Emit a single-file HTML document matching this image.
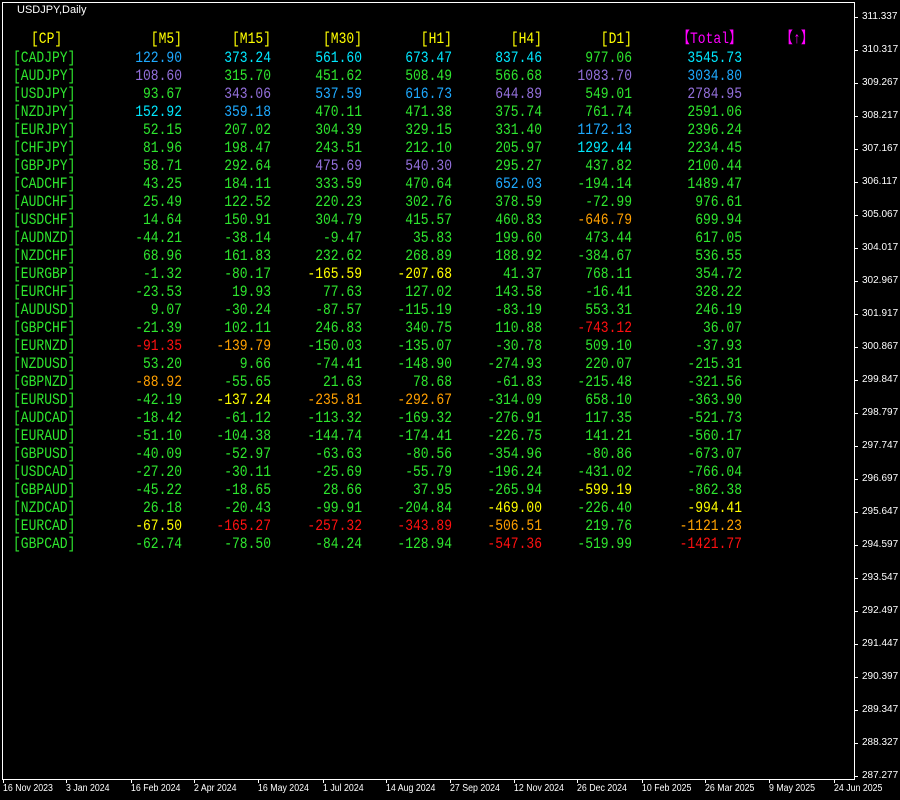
<!DOCTYPE html>
<html><head><meta charset="utf-8"><style>
body{margin:0;background:#000;width:900px;height:800px;overflow:hidden;position:relative;font-family:"Liberation Mono",monospace}
.frame{position:absolute;left:2px;top:2px;width:851px;height:776px;border:1px solid #fff}
.title{position:absolute;left:17px;top:4px;color:#fff;font:11px "Liberation Sans",sans-serif}
.r{position:absolute;left:0;width:900px;height:17px;font-size:13px;line-height:17px;transform:scaleY(1.22)}
.r span{position:absolute;top:0;white-space:pre}
.a{left:13px}
.b{right:718px}.c{right:629px}.d{right:538px}.e{right:448px}.f{right:358px}.g{right:268px}.h{right:158px}
.G{color:#2ee62e}.B{color:#1eaaff}.C{color:#00e8ff}.P{color:#9370db}.Y{color:#ffff00}.O{color:#ffa000}.R{color:#ff1010}.M{color:#ff00ff}
.ax{position:absolute;left:862px;color:#fff;font:10px "Liberation Sans",sans-serif}
.tk{position:absolute;left:854px;width:4px;height:1px;background:#fff}
.dt{position:absolute;top:783px;color:#fff;font:10px "Liberation Sans",sans-serif;white-space:nowrap;transform:scaleX(0.88);transform-origin:0 0}
.vt{position:absolute;top:779px;width:1px;height:4px;background:#fff}
</style></head><body>
<div class="frame"></div>
<div class="title">USDJPY,Daily</div>

<div class="r" style="top:30px"><span class="Y" style="left:31px">[CP]</span><span class="b Y">[M5]</span><span class="c Y">[M15]</span><span class="d Y">[M30]</span><span class="e Y">[H1]</span><span class="f Y">[H4]</span><span class="g Y">[D1]</span><span class="h M">【Total】</span><span class="M" style="left:780px">【↑】</span></div>

<div class="r" style="top:48.5px"><span class="a G">[CADJPY]</span><span class="b B">122.90</span><span class="c C">373.24</span><span class="d C">561.60</span><span class="e C">673.47</span><span class="f C">837.46</span><span class="g G">977.06</span><span class="h C">3545.73</span></div>
<div class="r" style="top:66.5px"><span class="a G">[AUDJPY]</span><span class="b P">108.60</span><span class="c G">315.70</span><span class="d G">451.62</span><span class="e G">508.49</span><span class="f G">566.68</span><span class="g P">1083.70</span><span class="h B">3034.80</span></div>
<div class="r" style="top:84.5px"><span class="a G">[USDJPY]</span><span class="b G">93.67</span><span class="c P">343.06</span><span class="d B">537.59</span><span class="e B">616.73</span><span class="f P">644.89</span><span class="g G">549.01</span><span class="h P">2784.95</span></div>
<div class="r" style="top:102.5px"><span class="a G">[NZDJPY]</span><span class="b C">152.92</span><span class="c B">359.18</span><span class="d G">470.11</span><span class="e G">471.38</span><span class="f G">375.74</span><span class="g G">761.74</span><span class="h G">2591.06</span></div>
<div class="r" style="top:120.5px"><span class="a G">[EURJPY]</span><span class="b G">52.15</span><span class="c G">207.02</span><span class="d G">304.39</span><span class="e G">329.15</span><span class="f G">331.40</span><span class="g B">1172.13</span><span class="h G">2396.24</span></div>
<div class="r" style="top:138.5px"><span class="a G">[CHFJPY]</span><span class="b G">81.96</span><span class="c G">198.47</span><span class="d G">243.51</span><span class="e G">212.10</span><span class="f G">205.97</span><span class="g C">1292.44</span><span class="h G">2234.45</span></div>
<div class="r" style="top:156.5px"><span class="a G">[GBPJPY]</span><span class="b G">58.71</span><span class="c G">292.64</span><span class="d P">475.69</span><span class="e P">540.30</span><span class="f G">295.27</span><span class="g G">437.82</span><span class="h G">2100.44</span></div>
<div class="r" style="top:174.5px"><span class="a G">[CADCHF]</span><span class="b G">43.25</span><span class="c G">184.11</span><span class="d G">333.59</span><span class="e G">470.64</span><span class="f B">652.03</span><span class="g G">-194.14</span><span class="h G">1489.47</span></div>
<div class="r" style="top:192.5px"><span class="a G">[AUDCHF]</span><span class="b G">25.49</span><span class="c G">122.52</span><span class="d G">220.23</span><span class="e G">302.76</span><span class="f G">378.59</span><span class="g G">-72.99</span><span class="h G">976.61</span></div>
<div class="r" style="top:210.5px"><span class="a G">[USDCHF]</span><span class="b G">14.64</span><span class="c G">150.91</span><span class="d G">304.79</span><span class="e G">415.57</span><span class="f G">460.83</span><span class="g O">-646.79</span><span class="h G">699.94</span></div>
<div class="r" style="top:228.5px"><span class="a G">[AUDNZD]</span><span class="b G">-44.21</span><span class="c G">-38.14</span><span class="d G">-9.47</span><span class="e G">35.83</span><span class="f G">199.60</span><span class="g G">473.44</span><span class="h G">617.05</span></div>
<div class="r" style="top:246.5px"><span class="a G">[NZDCHF]</span><span class="b G">68.96</span><span class="c G">161.83</span><span class="d G">232.62</span><span class="e G">268.89</span><span class="f G">188.92</span><span class="g G">-384.67</span><span class="h G">536.55</span></div>
<div class="r" style="top:264.5px"><span class="a G">[EURGBP]</span><span class="b G">-1.32</span><span class="c G">-80.17</span><span class="d Y">-165.59</span><span class="e Y">-207.68</span><span class="f G">41.37</span><span class="g G">768.11</span><span class="h G">354.72</span></div>
<div class="r" style="top:282.5px"><span class="a G">[EURCHF]</span><span class="b G">-23.53</span><span class="c G">19.93</span><span class="d G">77.63</span><span class="e G">127.02</span><span class="f G">143.58</span><span class="g G">-16.41</span><span class="h G">328.22</span></div>
<div class="r" style="top:300.5px"><span class="a G">[AUDUSD]</span><span class="b G">9.07</span><span class="c G">-30.24</span><span class="d G">-87.57</span><span class="e G">-115.19</span><span class="f G">-83.19</span><span class="g G">553.31</span><span class="h G">246.19</span></div>
<div class="r" style="top:318.5px"><span class="a G">[GBPCHF]</span><span class="b G">-21.39</span><span class="c G">102.11</span><span class="d G">246.83</span><span class="e G">340.75</span><span class="f G">110.88</span><span class="g R">-743.12</span><span class="h G">36.07</span></div>
<div class="r" style="top:336.5px"><span class="a G">[EURNZD]</span><span class="b R">-91.35</span><span class="c O">-139.79</span><span class="d G">-150.03</span><span class="e G">-135.07</span><span class="f G">-30.78</span><span class="g G">509.10</span><span class="h G">-37.93</span></div>
<div class="r" style="top:354.5px"><span class="a G">[NZDUSD]</span><span class="b G">53.20</span><span class="c G">9.66</span><span class="d G">-74.41</span><span class="e G">-148.90</span><span class="f G">-274.93</span><span class="g G">220.07</span><span class="h G">-215.31</span></div>
<div class="r" style="top:372.5px"><span class="a G">[GBPNZD]</span><span class="b O">-88.92</span><span class="c G">-55.65</span><span class="d G">21.63</span><span class="e G">78.68</span><span class="f G">-61.83</span><span class="g G">-215.48</span><span class="h G">-321.56</span></div>
<div class="r" style="top:390.5px"><span class="a G">[EURUSD]</span><span class="b G">-42.19</span><span class="c Y">-137.24</span><span class="d O">-235.81</span><span class="e O">-292.67</span><span class="f G">-314.09</span><span class="g G">658.10</span><span class="h G">-363.90</span></div>
<div class="r" style="top:408.5px"><span class="a G">[AUDCAD]</span><span class="b G">-18.42</span><span class="c G">-61.12</span><span class="d G">-113.32</span><span class="e G">-169.32</span><span class="f G">-276.91</span><span class="g G">117.35</span><span class="h G">-521.73</span></div>
<div class="r" style="top:426.5px"><span class="a G">[EURAUD]</span><span class="b G">-51.10</span><span class="c G">-104.38</span><span class="d G">-144.74</span><span class="e G">-174.41</span><span class="f G">-226.75</span><span class="g G">141.21</span><span class="h G">-560.17</span></div>
<div class="r" style="top:444.5px"><span class="a G">[GBPUSD]</span><span class="b G">-40.09</span><span class="c G">-52.97</span><span class="d G">-63.63</span><span class="e G">-80.56</span><span class="f G">-354.96</span><span class="g G">-80.86</span><span class="h G">-673.07</span></div>
<div class="r" style="top:462.5px"><span class="a G">[USDCAD]</span><span class="b G">-27.20</span><span class="c G">-30.11</span><span class="d G">-25.69</span><span class="e G">-55.79</span><span class="f G">-196.24</span><span class="g G">-431.02</span><span class="h G">-766.04</span></div>
<div class="r" style="top:480.5px"><span class="a G">[GBPAUD]</span><span class="b G">-45.22</span><span class="c G">-18.65</span><span class="d G">28.66</span><span class="e G">37.95</span><span class="f G">-265.94</span><span class="g Y">-599.19</span><span class="h G">-862.38</span></div>
<div class="r" style="top:498.5px"><span class="a G">[NZDCAD]</span><span class="b G">26.18</span><span class="c G">-20.43</span><span class="d G">-99.91</span><span class="e G">-204.84</span><span class="f Y">-469.00</span><span class="g G">-226.40</span><span class="h Y">-994.41</span></div>
<div class="r" style="top:516.5px"><span class="a G">[EURCAD]</span><span class="b Y">-67.50</span><span class="c R">-165.27</span><span class="d R">-257.32</span><span class="e R">-343.89</span><span class="f O">-506.51</span><span class="g G">219.76</span><span class="h O">-1121.23</span></div>
<div class="r" style="top:534.5px"><span class="a G">[GBPCAD]</span><span class="b G">-62.74</span><span class="c G">-78.50</span><span class="d G">-84.24</span><span class="e G">-128.94</span><span class="f R">-547.36</span><span class="g G">-519.99</span><span class="h R">-1421.77</span></div>

<div class="tk" style="top:17px"></div><div class="ax" style="top:11px">311.337</div>
<div class="tk" style="top:50px"></div><div class="ax" style="top:44px">310.317</div>
<div class="tk" style="top:83px"></div><div class="ax" style="top:77px">309.267</div>
<div class="tk" style="top:116px"></div><div class="ax" style="top:110px">308.217</div>
<div class="tk" style="top:149px"></div><div class="ax" style="top:143px">307.167</div>
<div class="tk" style="top:182px"></div><div class="ax" style="top:176px">306.117</div>
<div class="tk" style="top:215px"></div><div class="ax" style="top:209px">305.067</div>
<div class="tk" style="top:248px"></div><div class="ax" style="top:242px">304.017</div>
<div class="tk" style="top:281px"></div><div class="ax" style="top:275px">302.967</div>
<div class="tk" style="top:314px"></div><div class="ax" style="top:308px">301.917</div>
<div class="tk" style="top:347px"></div><div class="ax" style="top:341px">300.867</div>
<div class="tk" style="top:380px"></div><div class="ax" style="top:374px">299.847</div>
<div class="tk" style="top:413px"></div><div class="ax" style="top:407px">298.797</div>
<div class="tk" style="top:446px"></div><div class="ax" style="top:440px">297.747</div>
<div class="tk" style="top:479px"></div><div class="ax" style="top:473px">296.697</div>
<div class="tk" style="top:512px"></div><div class="ax" style="top:506px">295.647</div>
<div class="tk" style="top:545px"></div><div class="ax" style="top:539px">294.597</div>
<div class="tk" style="top:578px"></div><div class="ax" style="top:572px">293.547</div>
<div class="tk" style="top:611px"></div><div class="ax" style="top:605px">292.497</div>
<div class="tk" style="top:644px"></div><div class="ax" style="top:638px">291.447</div>
<div class="tk" style="top:677px"></div><div class="ax" style="top:671px">290.397</div>
<div class="tk" style="top:710px"></div><div class="ax" style="top:704px">289.347</div>
<div class="tk" style="top:743px"></div><div class="ax" style="top:737px">288.327</div>
<div class="tk" style="top:776px"></div><div class="ax" style="top:770px">287.277</div>

<div class="vt" style="left:3px"></div><div class="dt" style="left:3px">16 Nov 2023</div>
<div class="vt" style="left:66px"></div><div class="dt" style="left:66px">3 Jan 2024</div>
<div class="vt" style="left:131px"></div><div class="dt" style="left:131px">16 Feb 2024</div>
<div class="vt" style="left:194px"></div><div class="dt" style="left:194px">2 Apr 2024</div>
<div class="vt" style="left:258px"></div><div class="dt" style="left:258px">16 May 2024</div>
<div class="vt" style="left:323px"></div><div class="dt" style="left:323px">1 Jul 2024</div>
<div class="vt" style="left:386px"></div><div class="dt" style="left:386px">14 Aug 2024</div>
<div class="vt" style="left:450px"></div><div class="dt" style="left:450px">27 Sep 2024</div>
<div class="vt" style="left:514px"></div><div class="dt" style="left:514px">12 Nov 2024</div>
<div class="vt" style="left:577px"></div><div class="dt" style="left:577px">26 Dec 2024</div>
<div class="vt" style="left:642px"></div><div class="dt" style="left:642px">10 Feb 2025</div>
<div class="vt" style="left:705px"></div><div class="dt" style="left:705px">26 Mar 2025</div>
<div class="vt" style="left:769px"></div><div class="dt" style="left:769px">9 May 2025</div>
<div class="vt" style="left:834px"></div><div class="dt" style="left:834px">24 Jun 2025</div>
</body></html>
